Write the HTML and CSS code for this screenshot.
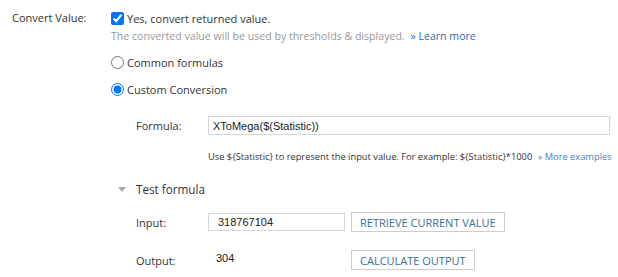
FILE: index.html
```html
<!DOCTYPE html>
<html>
<head>
<meta charset="utf-8">
<link rel="stylesheet" href="styles.css">
</head>
<body>
<div class="form">
  <div class="row">
    <div class="lbl">Convert Value:</div>
    <div class="content">
      <label class="opt opt-check"><input type="checkbox" checked><span>Yes, convert returned value.</span></label>
      <div class="help">The converted value will be used by thresholds &amp; displayed. <a class="link">&raquo; Learn more</a></div>
      <label class="opt opt-r1"><input type="radio" name="m"><span>Common formulas</span></label>
      <label class="opt opt-r2"><input type="radio" name="m" checked><span>Custom Conversion</span></label>
      <div class="sub">
        <div class="frow f-formula">
          <div class="flbl">Formula:</div>
          <div class="finput wide">XToMega($(Statistic))</div>
        </div>
        <div class="hint">Use ${Statistic} to represent the input value. For example: ${Statistic}*1000 <a class="link">&raquo; More examples</a></div>
        <div class="toggle"><span class="tri"></span><span>Test formula</span></div>
        <div class="frow f-input">
          <div class="flbl">Input:</div>
          <div class="finput small">318767104</div>
          <button class="btn">RETRIEVE CURRENT VALUE</button>
        </div>
        <div class="frow f-output">
          <div class="flbl">Output:</div>
          <div class="outval">304</div>
          <button class="btn">CALCULATE OUTPUT</button>
        </div>
      </div>
    </div>
  </div>
</div>
</body>
</html>
```

FILE: styles.css
```css
html, body {
  margin: 0;
  padding: 0;
  background: #fff;
}
body {
  font-family: "Open Sans", "Segoe UI", sans-serif;
  font-size: 11px;
  color: #333;
}
.form {
  padding-top: 9px;
}
.row {
  display: flex;
}
.lbl {
  flex-shrink: 0;
  box-sizing: border-box;
  width: 111px;
  padding-left: 12px;
  line-height: 18px;
}
.content {
  flex: 1;
  min-width: 0;
}
.opt {
  display: flex;
  align-items: center;
  height: 18px;
}
.opt input {
  margin: 0 3px 0 0;
  width: 13px;
  height: 13px;
}
.help {
  color: #999;
  font-size: 10.6px;
  line-height: 16px;
  margin-top: 1px;
}
.link {
  color: #2f6aa8;
  margin-left: 3px;
}
.opt-r1 {
  margin-top: 9px;
}
.opt-r2 {
  margin-top: 9px;
}
.sub {
  padding-left: 25px;
  margin-top: 18px;
  padding-right: 8px;
}
.frow {
  display: flex;
  align-items: center;
}
.flbl {
  flex-shrink: 0;
  width: 72px;
}
.finput {
  box-sizing: border-box;
  height: 19px;
  border: 1px solid #d6d6d6;
  font-family: "Liberation Sans", Arial, sans-serif;
  font-size: 11px;
  color: #222;
  display: flex;
  align-items: center;
  padding-left: 4px;
}
.wide {
  flex: 1;
}
.small {
  flex-shrink: 0;
  width: 137px;
  height: 18px;
  padding-left: 9px;
}
.hint {
  margin-top: 15px;
  margin-left: 72px;
  font-size: 9.3px;
  line-height: 14px;
  color: #333;
  white-space: nowrap;
}
.hint .link {
  color: #4a7fb8;
}
.toggle {
  display: flex;
  align-items: center;
  margin-top: 17px;
  margin-left: -18px;
  height: 16px;
  font-size: 11.7px;
}
.tri {
  width: 0;
  height: 0;
  border-left: 4px solid transparent;
  border-right: 4px solid transparent;
  border-top: 5px solid #aaa;
  margin-right: 10px;
}
.f-input {
  margin-top: 15px;
}
.f-output {
  margin-top: 18px;
}
.outval {
  flex-shrink: 0;
  box-sizing: border-box;
  width: 137px;
  padding-left: 8px;
  font-family: "Liberation Sans", Arial, sans-serif;
  font-size: 11px;
  color: #222;
  margin-top: -4px;
}
.btn {
  flex-shrink: 0;
  margin-left: 6px;
  height: 20px;
  padding: 0 8px;
  background: #fff;
  border: 1px solid #ccc;
  border-radius: 0;
  font-family: "Open Sans", sans-serif;
  font-size: 11px;
  color: #3a6e93;
}
```
